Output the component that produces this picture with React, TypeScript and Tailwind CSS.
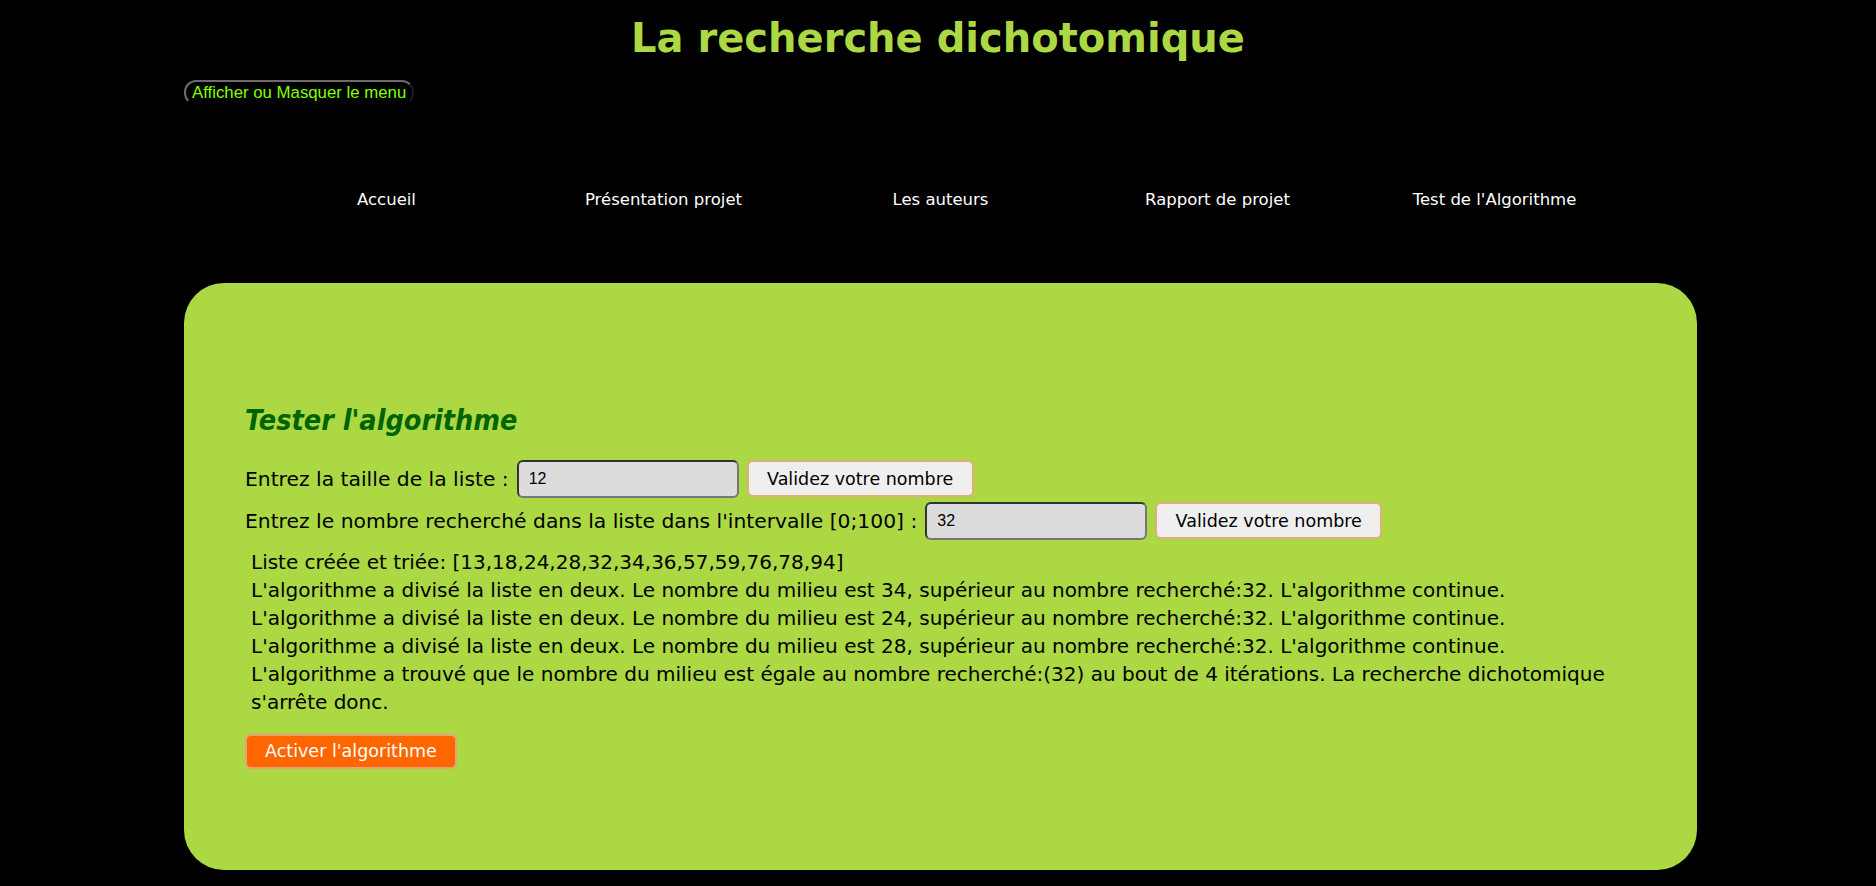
const NAV_ITEMS = [
  'Accueil',
  'Présentation projet',
  'Les auteurs',
  'Rapport de projet',
  "Test de l'Algorithme",
];

const LOG_LINES = [
  'Liste créée et triée: [13,18,24,28,32,34,36,57,59,76,78,94]',
  "L'algorithme a divisé la liste en deux. Le nombre du milieu est 34, supérieur au nombre recherché:32. L'algorithme continue.",
  "L'algorithme a divisé la liste en deux. Le nombre du milieu est 24, supérieur au nombre recherché:32. L'algorithme continue.",
  "L'algorithme a divisé la liste en deux. Le nombre du milieu est 28, supérieur au nombre recherché:32. L'algorithme continue.",
  "L'algorithme a trouvé que le nombre du milieu est égale au nombre recherché:(32) au bout de 4 itérations. La recherche dichotomique s'arrête donc.",
];

function NumberField({ value }: { value: string }) {
  return (
    <input
      type="text"
      defaultValue={value}
      className="h-[38px] w-[222px] rounded-[6px] border-2 border-[#333] border-r-[#777] border-b-[#777] bg-[#dcdcdc] px-[10px] font-['Liberation_Sans',Arial,sans-serif] text-[16px] text-black outline-none"
    />
  );
}

function ValidateButton() {
  return (
    <button className="h-[37px] w-[227px] rounded-[6px] border-2 border-[#e2ad7c] bg-[#efefef] text-[17.5px] text-black">
      Validez votre nombre
    </button>
  );
}

export default function App() {
  return (
    <div className="min-h-screen bg-black pb-[18px] font-['DejaVu_Sans',Verdana,sans-serif]">
      <h1 className="pt-[15px] text-center text-[40px] leading-[47px] font-bold text-[#abd843]">
        La recherche dichotomique
      </h1>

      <button className="mt-[18px] ml-[184px] rounded-[12px] border-2 border-t-[#6b6b6b] border-l-[#6b6b6b] border-r-[#1c1c1c] border-b-black bg-black px-[6px] py-[1px] font-['Liberation_Sans',Arial,sans-serif] text-[16.8px] leading-[19px] text-[#80ff00]">
        Afficher ou Masquer le menu
      </button>

      <nav className="mt-[85px] ml-[248px] grid w-[1385px] grid-cols-5 text-center text-[16.5px] text-white">
        {NAV_ITEMS.map((item) => (
          <a key={item} href="#" className="leading-[19px]">
            {item}
          </a>
        ))}
      </nav>

      <main className="mt-[74px] ml-[184px] w-[1513px] rounded-[40px] bg-[#abd843] px-[61px] pt-[117px] pb-[101px]">
        <h2 className="font-['DejaVu_Sans_Condensed','DejaVu_Sans',sans-serif] text-[28.5px] font-bold italic text-[#006400] font-stretch-condensed">
          Tester l'algorithme
        </h2>

        <div className="mt-[17px] flex items-center gap-[8px] text-[20.3px] text-black">
          <span>Entrez la taille de la liste :</span>
          <NumberField value="12" />
          <ValidateButton />
        </div>
        <div className="mt-[4px] flex items-center gap-[8px] text-[20.3px] text-black">
          <span>Entrez le nombre recherché dans la liste dans l'intervalle [0;100] :</span>
          <NumberField value="32" />
          <ValidateButton />
        </div>

        <div className="mt-[8px] ml-[6px] text-[20px] leading-[28px] text-black">
          {LOG_LINES.map((line) => (
            <p key={line}>{line}</p>
          ))}
        </div>

        <button className="mt-[18px] h-[35px] rounded-[6px] border-2 border-[#e8a274] bg-[#ff6600] px-[18px] text-[17.5px] text-white">
          Activer l'algorithme
        </button>
      </main>
    </div>
  );
}
